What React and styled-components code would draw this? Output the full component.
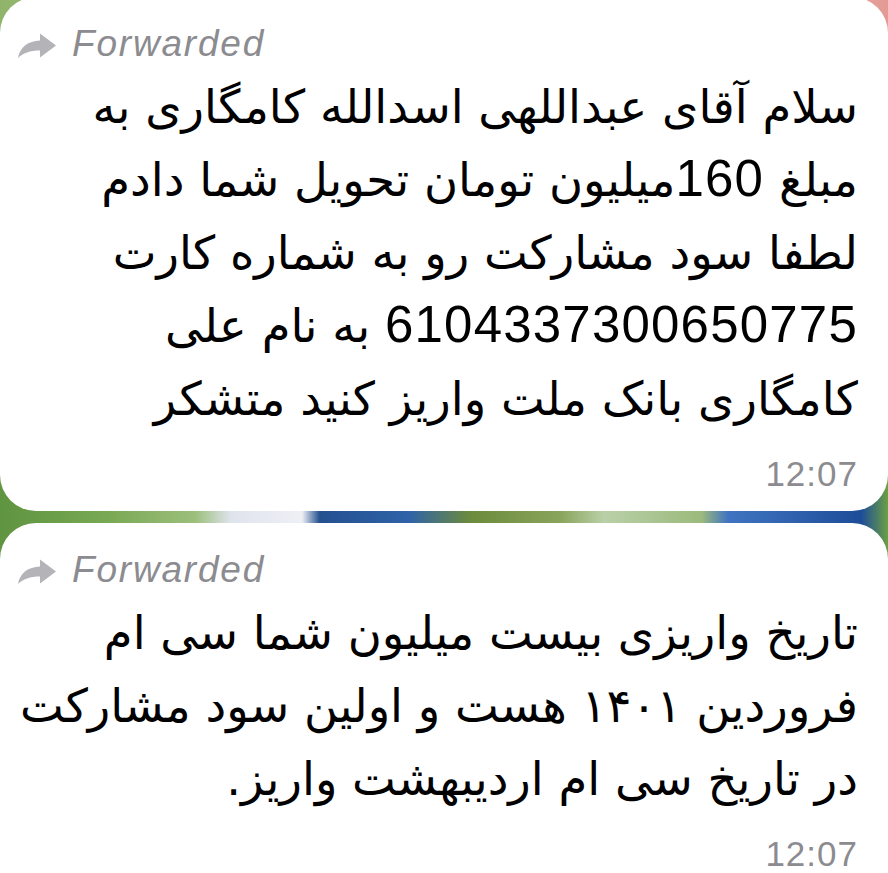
import React from "react";
import styled, { createGlobalStyle } from "styled-components";

const GlobalStyle = createGlobalStyle`
  html, body {
    margin: 0;
    padding: 0;
    overflow: hidden;
    background: #ffffff;
  }
`;

const messages = [
  {
    id: 1,
    lines: [
      "سلام آقای عبداللهی اسدالله کامگاری به",
      "مبلغ 160میلیون تومان تحویل شما دادم",
      "لطفا سود مشارکت رو به شماره کارت",
      "6104337300650775 به نام علی",
      "کامگاری بانک ملت واریز کنید متشکر",
    ],
    time: "12:07",
  },
  {
    id: 2,
    lines: [
      "تاریخ واریزی بیست میلیون شما سی ام",
      "فروردین ۱۴۰۱ هست و اولین سود مشارکت",
      "در تاریخ سی ام اردیبهشت واریز.",
    ],
    time: "12:07",
  },
];

// latin digits are set a bit larger, like the iOS font in the screenshot
function renderLine(text) {
  return text.split(/([0-9]+)/).map((part, i) =>
    /^[0-9]+$/.test(part) ? <Num key={i}>{part}</Num> : part
  );
}

function ForwardArrow() {
  return (
    <svg width="40" height="27" viewBox="0 0 40 27">
      <path
        d="M1 26 C3 15, 11 9, 23 8.5 L23 1.5 L39 13.5 L23 25.5 L23 18.5 C13 18.5, 6 21, 1 26 Z"
        fill="#b4b4b8"
      />
    </svg>
  );
}

function App() {
  return (
    <Page>
      <GlobalStyle />
      {messages.map((msg, i) => (
        <Bubble key={msg.id} first={i === 0} last={i === messages.length - 1}>
          <ForwardedRow>
            <ForwardArrow />
            <ForwardedLabel>Forwarded</ForwardedLabel>
          </ForwardedRow>
          <MessageText dir="rtl">
            {msg.lines.map((line, n) => (
              <Line key={n}>{renderLine(line)}</Line>
            ))}
          </MessageText>
          <Time>{msg.time}</Time>
        </Bubble>
      ))}
    </Page>
  );
}

const Page = styled.div`
  width: 888px;
  height: 873px;
  overflow: hidden;
  display: flex;
  flex-direction: column;
  gap: 12px;
  background:
    linear-gradient(90deg, #8fb46a 0%, #c9d6b0 40%, #e7b3ad 90%, #e39a93 100%) top / 100% 40px no-repeat,
    linear-gradient(
      90deg,
      #5f9440 0%,
      #78a853 12%,
      #9cbf7c 22%,
      #dfe3ec 26%,
      #eef0f5 34%,
      #24508f 36%,
      #2f62a8 46%,
      #6c8b3c 53%,
      #88a45a 63%,
      #b9d0a8 68%,
      #9cba7c 79%,
      #3f74c2 82%,
      #1e4d98 97%,
      #6aa043 100%
    );
`;

const Bubble = styled.div`
  background: #ffffff;
  border-radius: 36px;
  margin-top: ${(p) => (p.first ? "-3px" : "0")};
  padding: 27px 30px ${(p) => (p.last ? "40px" : "17px")} 17px;
  display: flex;
  flex-direction: column;
  flex-shrink: 0;
`;

const ForwardedRow = styled.div`
  display: flex;
  align-items: center;
  gap: 15px;
  height: 40px;
  margin-bottom: 7px;

  svg {
    flex-shrink: 0;
    margin-top: 2px;
  }
`;

const ForwardedLabel = styled.span`
  font-family: "Liberation Sans", Arial, sans-serif;
  font-style: italic;
  font-size: 37px;
  line-height: 40px;
  letter-spacing: 1.8px;
  color: #8b8b90;
`;

const MessageText = styled.div`
  display: flex;
  flex-direction: column;
  text-align: right;
  font-family: "DejaVu Sans", sans-serif;
  font-size: 46.5px;
  line-height: 73px;
  color: #000000;
`;

const Line = styled.div`
  white-space: nowrap;
`;

const Num = styled.span`
  display: inline-block;
  font-family: "Liberation Sans", Arial, sans-serif;
  font-size: 51px;
  line-height: 1;
  letter-spacing: 1.2px;
`;

const Time = styled.div`
  align-self: flex-end;
  margin-top: 18px;
  font-family: "Liberation Sans", Arial, sans-serif;
  font-size: 35px;
  line-height: 40px;
  letter-spacing: 1px;
  color: #8b8b90;
`;

export default App;
